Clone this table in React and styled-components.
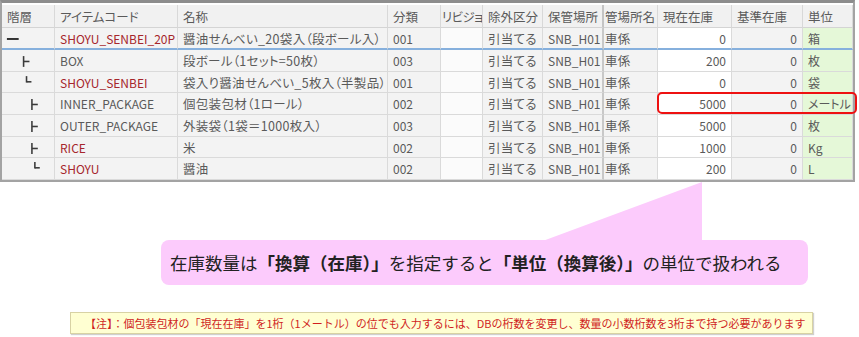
import React from 'react';
import styled, { createGlobalStyle } from 'styled-components';

const GlobalStyle = createGlobalStyle`
    body {
        margin: 0;
        background: #ffffff;
    }
`;

const COLUMNS = [53, 123, 210, 53, 42, 60, 61, 54, 74, 71, 50];
const ROW_HEIGHTS = [23, 22, 22, 21, 22, 22, 21, 22];

const HEADERS = ['階層', 'アイテムコード', '名称', '分類', 'リビジョ', '除外区分', '保管場所', '管場所名', '現在在庫', '基準在庫', '単位'];

const ROWS = [
    { mark: 'root', depth: 0, code: 'SHOYU_SENBEI_20P', red: true, name: '醤油せんべい_20袋入（段ボール入）', cat: '001', stock: 0, unit: '箱' },
    { mark: 'tee', depth: 1, code: 'BOX', red: false, name: '段ボール（1セット=50枚）', cat: '003', stock: 200, unit: '枚' },
    { mark: 'elbow', depth: 1, code: 'SHOYU_SENBEI', red: true, name: '袋入り醤油せんべい_5枚入（半製品）', cat: '001', stock: 0, unit: '袋' },
    { mark: 'tee', depth: 2, code: 'INNER_PACKAGE', red: false, name: '個包装包材（1ロール）', cat: '002', stock: 5000, unit: 'メートル' },
    { mark: 'tee', depth: 2, code: 'OUTER_PACKAGE', red: false, name: '外装袋（1袋＝1000枚入）', cat: '003', stock: 5000, unit: '枚' },
    { mark: 'tee', depth: 2, code: 'RICE', red: true, name: '米', cat: '002', stock: 1000, unit: 'Kg' },
    { mark: 'elbow', depth: 2, code: 'SHOYU', red: true, name: '醤油', cat: '002', stock: 200, unit: 'L' }
];

const Page = styled.div`
    position: relative;
    width: 859px;
    height: 337px;
    overflow: hidden;
    font-family: "Noto Sans CJK JP", "Noto Sans", sans-serif;
`;

const Grid = styled.div`
    display: grid;
    grid-template-columns: ${COLUMNS.map((w) => `${w}px`).join(' ')};
    grid-template-rows: ${ROW_HEIGHTS.map((h) => `${h}px`).join(' ')};
    width: 851px;
    padding-top: 2px;
    border-top: 3px solid #8d8d8d;
    border-left: 2px solid #a3a3a3;
    border-right: 2px solid #a3a3a3;
    border-bottom: 2px solid #a3a3a3;
    background: #ffffff;
    font-size: 12px;
    font-feature-settings: "palt";
`;

const HeadCell = styled.div`
    display: flex;
    align-items: center;
    padding-left: ${(p) => p.$pad}px;
    background: #f1f1f1;
    color: #5a5a5a;
    font-size: 12.5px;
    letter-spacing: ${(p) => (p.$narrow ? '-0.6px' : '0')};
    border-right: ${(p) => (p.$thick ? '2px solid #c4c4c4' : '1px solid #d8d8d8')};
    border-bottom: 1px solid #d4d4d4;
    white-space: nowrap;
    overflow: hidden;
    box-sizing: border-box;
`;

const Cell = styled.div`
    display: flex;
    align-items: center;
    justify-content: ${(p) => (p.$right ? 'flex-end' : 'flex-start')};
    padding: 0 ${(p) => (p.$right ? '5px' : '0')} 0 ${(p) => (p.$clip ? '1px' : p.$right ? '0' : '5px')};
    background: ${(p) => p.$bg || '#f3f3f3'};
    color: ${(p) => (p.$red ? '#a6262c' : '#5a5a5a')};
    font-size: ${(p) => (p.$jp ? '12.5px' : '12px')};
    letter-spacing: ${(p) => (p.$jp ? '0.3px' : '0')};
    border-right: ${(p) => (p.$thick ? '2px solid #c8c8c8' : '1px solid #dadada')};
    border-bottom: ${(p) => (p.$selected ? '2px solid #86b0dd' : '1px solid #dadada')};
    white-space: nowrap;
    overflow: hidden;
    box-sizing: border-box;
`;

const TreeCell = styled(Cell)`
    padding: 0;
    align-items: stretch;
`;

const TreeSvg = styled.svg`
    display: block;
    width: 53px;
    height: 21px;
`;

const TreeMark = ({ mark, depth }) => {
    if (mark === 'root') {
        return (
            <TreeSvg viewBox="0 0 53 21">
                <line x1="5" y1="11" x2="17" y2="11" stroke="#333" strokeWidth="2" />
            </TreeSvg>
        );
    }
    if (mark === 'tee') {
        const x = depth === 1 ? 22 : 30.5;
        return (
            <TreeSvg viewBox="0 0 53 21">
                <line x1={x} y1="6" x2={x} y2="17" stroke="#3a3a3a" strokeWidth="1.6" />
                <line x1={x} y1="11.5" x2={x + 6} y2="11.5" stroke="#3a3a3a" strokeWidth="1.6" />
            </TreeSvg>
        );
    }
    const x = depth === 1 ? 25 : 33.5;
    return (
        <TreeSvg viewBox="0 0 53 21">
            <line x1={x} y1="4" x2={x} y2="10.5" stroke="#3a3a3a" strokeWidth="1.6" />
            <line x1={x} y1="9.8" x2={x + 5} y2="9.8" stroke="#3a3a3a" strokeWidth="1.6" />
        </TreeSvg>
    );
};

const Highlight = styled.div`
    position: absolute;
    left: 657px;
    top: 92px;
    width: 200px;
    height: 22px;
    border: 2px solid #ee1111;
    border-radius: 5px;
    box-sizing: border-box;
    pointer-events: none;
`;

const Tail = styled.svg`
    position: absolute;
    left: 0;
    top: 0;
    width: 859px;
    height: 337px;
    pointer-events: none;
`;

const Balloon = styled.div`
    position: relative;
    display: flex;
    align-items: center;
    margin: 58px 0 0 161px;
    width: 647px;
    height: 45px;
    padding-left: 9px;
    box-sizing: border-box;
    background: #fccbfc;
    border-radius: 8px;
    color: #222222;
    font-size: 17.5px;
    white-space: nowrap;

    strong {
        font-weight: 700;
    }
`;

const Note = styled.div`
    display: flex;
    align-items: center;
    margin: 27px 0 0 70px;
    width: 743px;
    height: 22px;
    padding-left: 14px;
    box-sizing: border-box;
    background: #ffffd2;
    border: 1px solid #d8d2a4;
    box-shadow: 1px 1px 1px #d0d0d0;
    color: #d01f1f;
    font-size: 11px;
    white-space: nowrap;
`;

const headPad = (i) => {
    if (i === 7) return 1;
    if (i === 4) return 1;
    return 5;
};

const App = () => {
    return (
        <>
            <GlobalStyle />
            <Page>
                <Grid>
                    {HEADERS.map((h, i) => (
                        <HeadCell key={h} $pad={headPad(i)} $narrow={i === 4} $thick={i === 6}>
                            {h}
                        </HeadCell>
                    ))}
                    {ROWS.map((r, i) => {
                        const sel = i === 0;
                        return (
                            <React.Fragment key={r.code}>
                                <TreeCell $selected={sel}>
                                    <TreeMark mark={r.mark} depth={r.depth} />
                                </TreeCell>
                                <Cell $selected={sel} $red={r.red}>{r.code}</Cell>
                                <Cell $selected={sel} $jp>{r.name}</Cell>
                                <Cell $selected={sel}>{r.cat}</Cell>
                                <Cell $selected={sel} $bg="#fbfbfb" />
                                <Cell $selected={sel} $jp>引当てる</Cell>
                                <Cell $selected={sel} $thick>SNB_H01</Cell>
                                <Cell $selected={sel} $clip $jp>車係</Cell>
                                <Cell $selected={sel} $right $bg="#ffffff">{r.stock}</Cell>
                                <Cell $selected={sel} $right>0</Cell>
                                <Cell $selected={sel} $bg="#e5f8d8">{r.unit}</Cell>
                            </React.Fragment>
                        );
                    })}
                </Grid>
                <Highlight />
                <Tail viewBox="0 0 859 337">
                    <polygon points="540,242 702,182 702,242" fill="#fccbfc" />
                </Tail>
                <Balloon>
                    在庫数量は<strong>「換算（在庫）」</strong>を指定すると<strong>「単位（換算後）」</strong>の単位で扱われる
                </Balloon>
                <Note>
                    【注】：個包装包材の「現在在庫」を1桁（1メートル）の位でも入力するには、DBの桁数を変更し、数量の小数桁数を3桁まで持つ必要があります
                </Note>
            </Page>
        </>
    );
};

export default App;
